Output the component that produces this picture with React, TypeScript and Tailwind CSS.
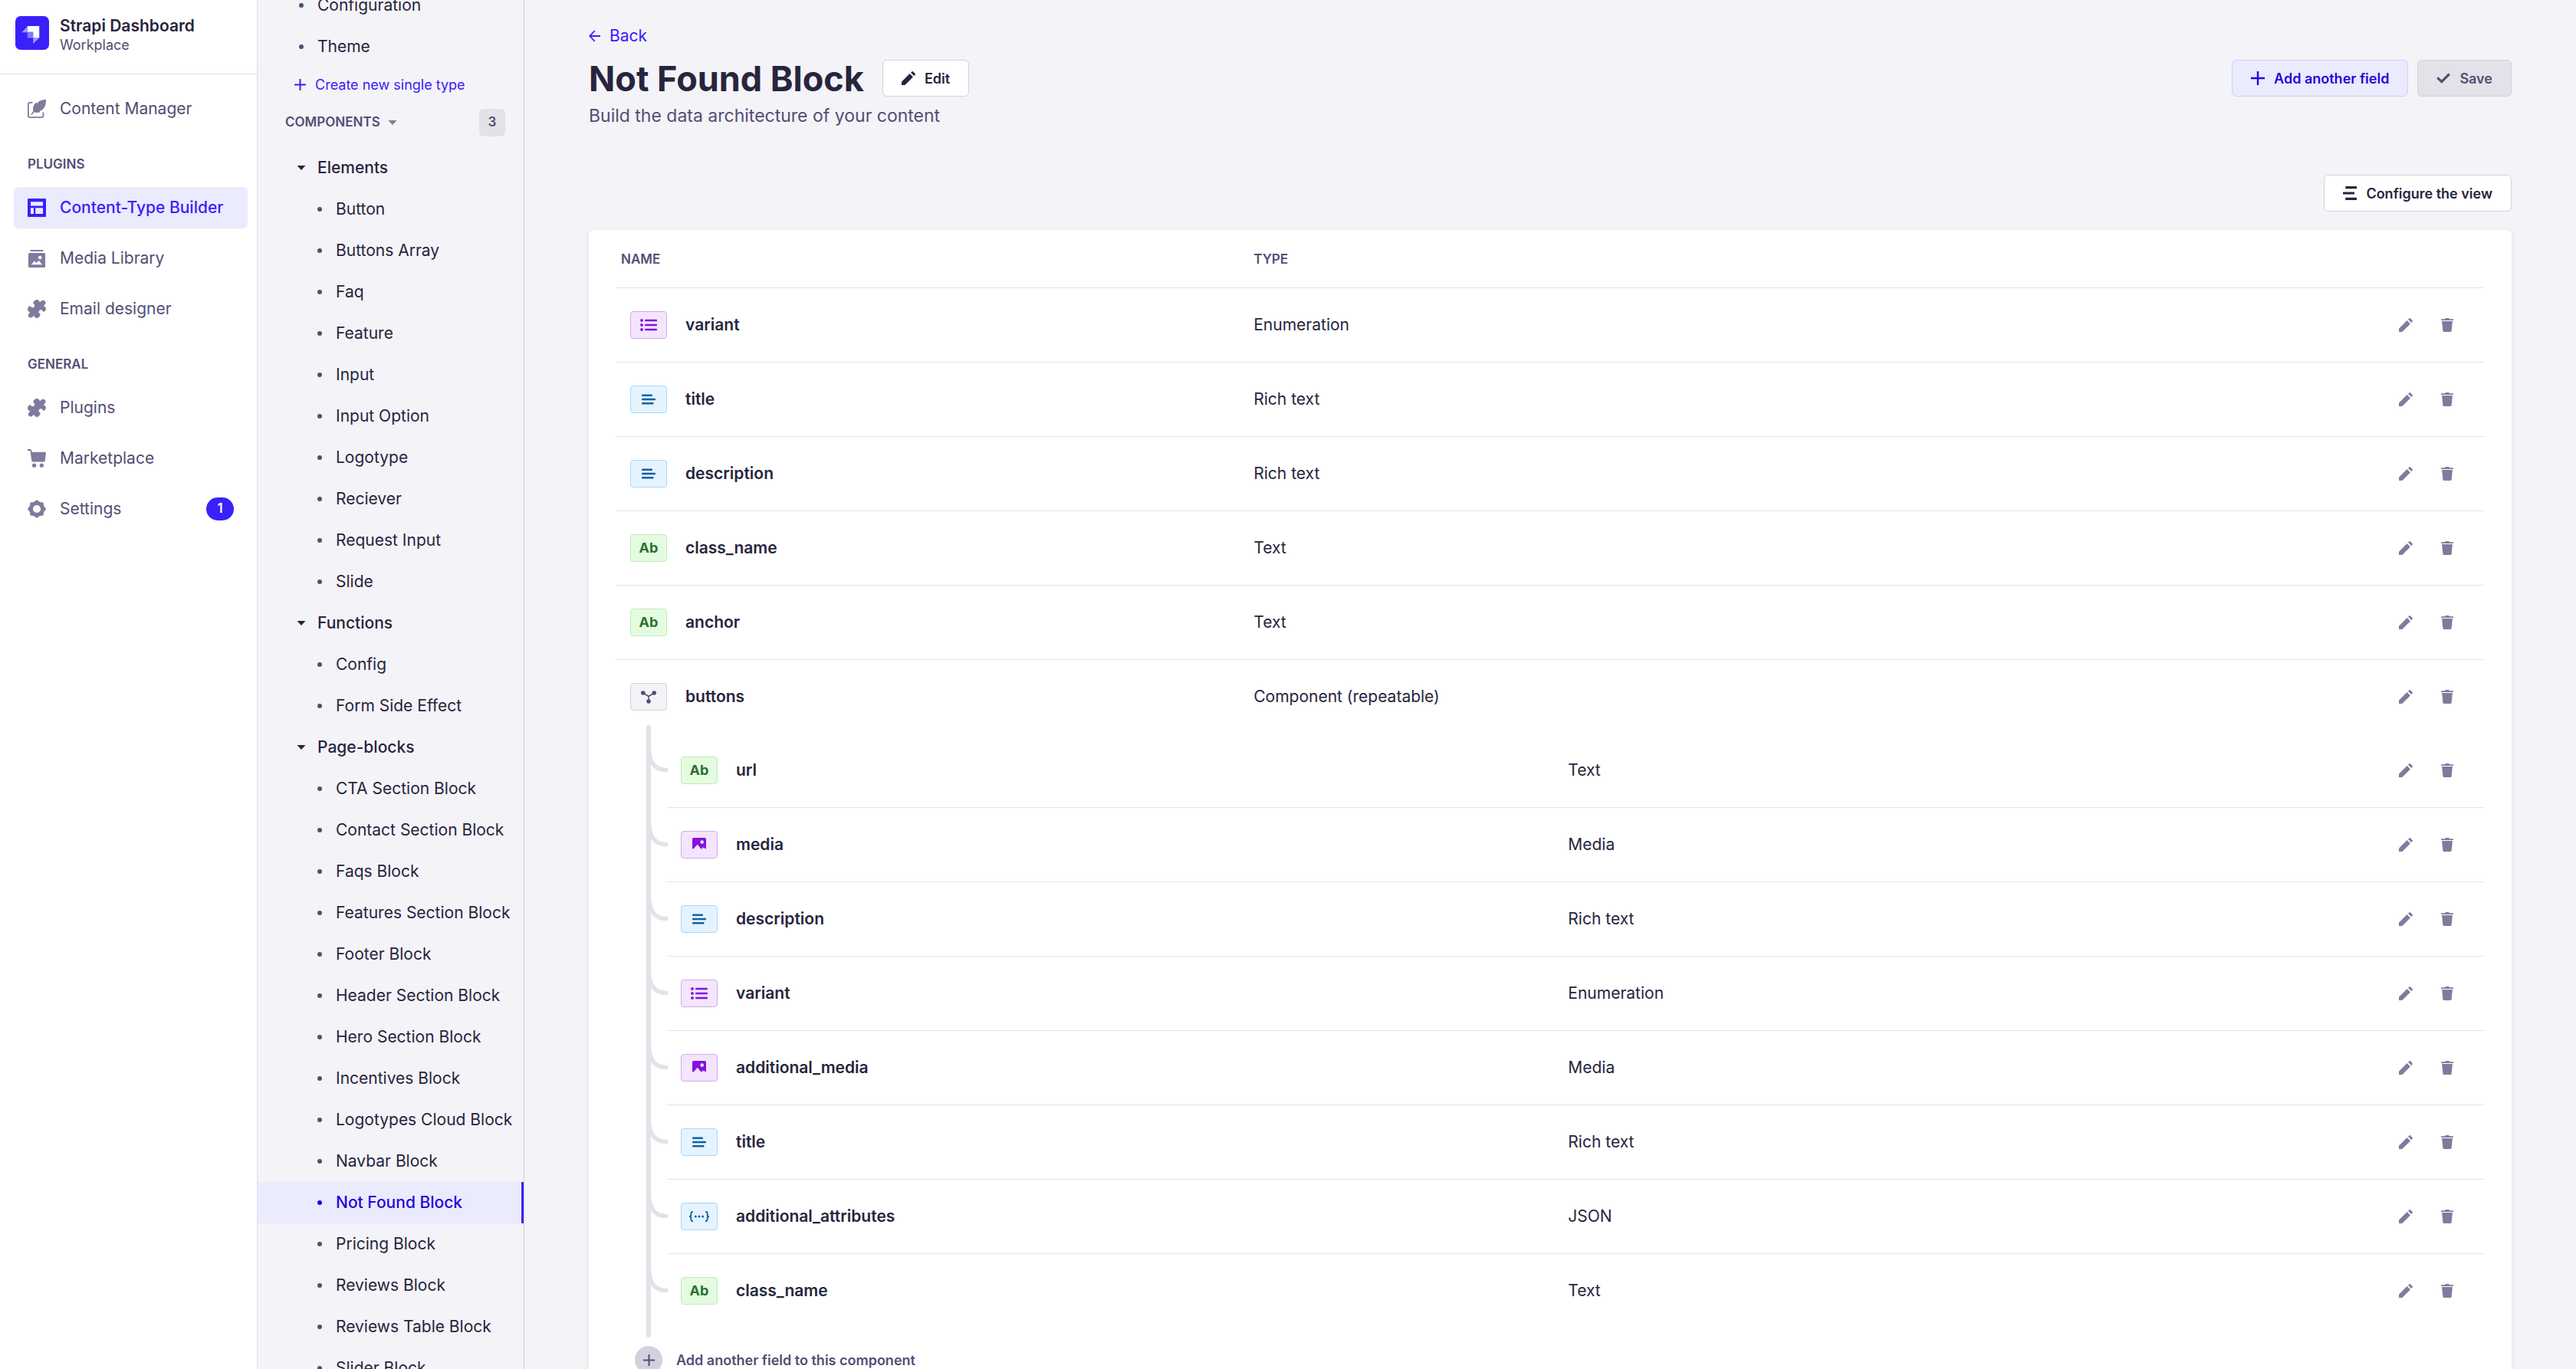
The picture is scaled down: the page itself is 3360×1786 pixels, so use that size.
import type { ReactNode } from 'react';

type Kind = 'enum' | 'rich' | 'text' | 'media' | 'json' | 'component';

interface Field {
  name: string;
  type: string;
  kind: Kind;
}

const fields: Field[] = [
  { name: 'variant', type: 'Enumeration', kind: 'enum' },
  { name: 'title', type: 'Rich text', kind: 'rich' },
  { name: 'description', type: 'Rich text', kind: 'rich' },
  { name: 'class_name', type: 'Text', kind: 'text' },
  { name: 'anchor', type: 'Text', kind: 'text' },
];

const buttonFields: Field[] = [
  { name: 'url', type: 'Text', kind: 'text' },
  { name: 'media', type: 'Media', kind: 'media' },
  { name: 'description', type: 'Rich text', kind: 'rich' },
  { name: 'variant', type: 'Enumeration', kind: 'enum' },
  { name: 'additional_media', type: 'Media', kind: 'media' },
  { name: 'title', type: 'Rich text', kind: 'rich' },
  { name: 'additional_attributes', type: 'JSON', kind: 'json' },
  { name: 'class_name', type: 'Text', kind: 'text' },
];

const groups = [
  {
    title: 'Elements',
    items: ['Button', 'Buttons Array', 'Faq', 'Feature', 'Input', 'Input Option', 'Logotype', 'Reciever', 'Request Input', 'Slide'],
  },
  { title: 'Functions', items: ['Config', 'Form Side Effect'] },
  {
    title: 'Page-blocks',
    items: [
      'CTA Section Block', 'Contact Section Block', 'Faqs Block', 'Features Section Block', 'Footer Block',
      'Header Section Block', 'Hero Section Block', 'Incentives Block', 'Logotypes Cloud Block', 'Navbar Block',
      'Not Found Block', 'Pricing Block', 'Reviews Block', 'Reviews Table Block', 'Slider Block',
    ],
  },
];

/* ---------- icons ---------- */

const Logo = () => (
  <svg viewBox="0 0 131 131" className="size-11 shrink-0" aria-hidden="true">
    <rect width="131" height="131" rx="20" fill="#3921fb" />
    <path d="M47 39H93V85H69V62H47z" fill="#fff" />
    <path d="M25 63L47 40V63zM69 85H93L69 107z" fill="#a195fd" />
    <path d="M47 62H69V85H47z" fill="#8577fc" />
  </svg>
);

const NavSvg = ({ children }: { children: ReactNode }) => (
  <svg viewBox="0 0 24 24" className="size-6 shrink-0" fill="currentColor" aria-hidden="true">{children}</svg>
);

const FeatherIcon = () => (
  <NavSvg>
    <path d="M6.500 3.800H3A2.200 2.200 0 0 0 .9 6V21A2.200 2.200 0 0 0 3 23.100H18.300A2.200 2.200 0 0 0 20.400 21V16.500" fill="none" stroke="currentColor" strokeWidth="1.800" />
    <path d="M24 0C24 6.500 22.500 12.500 15.500 15.300L16.500 16.200C13.500 17.300 10.500 17 8.700 16.200L5.300 20.100 4.200 19.300 7.300 15C6.600 10.500 7.600 6 11.500 3.500L12.500 5.500C13.300 2.300 17.500 0 24 0z" />
  </NavSvg>
);

const LayoutIcon = () => (
  <NavSvg>
    <path fillRule="evenodd" d="M1 0H23A1 1 0 0 1 24 1V23A1 1 0 0 1 23 24H1A1 1 0 0 1 0 23V1A1 1 0 0 1 1 0zM4 4.300V9.500H20V4.300zM4 12.200V20H8V12.200zM10.200 12.200V20H20V12.200z" />
  </NavSvg>
);

const MediaLibraryIcon = () => (
  <NavSvg>
    <rect x="3.500" y="1" width="17" height="2" rx=".6" />
    <path fillRule="evenodd" d="M2.200 5H21.800A1.200 1.200 0 0 1 23 6.200V22.800A1.200 1.200 0 0 1 21.800 24H2.200A1.200 1.200 0 0 1 1 22.800V6.200A1.200 1.200 0 0 1 2.200 5zM16.200 8.700A2.200 2.200 0 1 0 16.200 13.100A2.200 2.200 0 1 0 16.200 8.700zM4.800 20.300H19.200L14.600 14.800 11.500 18 8.800 15.500z" />
  </NavSvg>
);

const PuzzleIcon = () => (
  <NavSvg>
    <path d="M12 0c1.600 0 2.800.9 3.300 2.200.4 1 1.300.8 1.800.2.9-1.200 2.200-2 3.600-1.700 1.600.3 2.800 1.500 2.800 3.200 0 1.500-.8 2.500-1.800 3.200-.7.500-.8 1.200 0 1.600 1.400.5 2.300 1.700 2.300 3 0 1.700-1.200 3.400-2.600 4-.8.3-1.300-.1-1.600-.8-.6-1.300-1.700-2-3-1.700-1.600.3-2.500 1.900-2.200 3.300.2 1 .9 1.500 1.600 1.900.6.4.7 1 .2 1.600C15.500 22.800 13.800 24 12 24c-1.600 0-2.700-.9-3.200-2.200-.3-.7-1-.8-1.500-.2-.9 1.200-2 2-3.500 1.900C2 23.400.8 22.100.8 20.500c0-1.300.7-2.300 1.700-3 .6-.5.6-1.200-.1-1.600C1 15.300 0 13.900 0 12.300 0 10.800 1.200 9 2.700 8.300c.7-.3 1.200.1 1.600.7.6 1 1.600 1.500 2.800 1.200 1.500-.3 2.300-1.700 2-3.100-.2-.9-.8-1.500-1.500-2-.6-.4-.6-1-.2-1.600C8.600 1.500 10.200 0 12 0z" />
  </NavSvg>
);

const CartIcon = () => (
  <NavSvg>
    <path d="M0 0H3.200Q5 0 5.300 2L5.600 3.700H24L22.800 15Q22.600 16.500 21 16.500H7Q5.400 16.500 5.200 15L3.600 3Q3.500 2 2.800 2H0z" />
    <circle cx="8.600" cy="21.200" r="2.600" />
    <circle cx="18.300" cy="21.200" r="2.600" />
  </NavSvg>
);

const GearIcon = () => (
  <NavSvg>
    <circle cx="12" cy="12" r="7.600" fill="none" stroke="currentColor" strokeWidth="5" />
    {[0, 45, 90, 135, 180, 225, 270, 315].map((a) => (
      <path key={a} d="M8.500 3L10.600.9Q12-.6 13.400.9L15.500 3z" transform={`rotate(${a} 12 12)`} />
    ))}
  </NavSvg>
);

const PencilIcon = () => (
  <svg viewBox="0 0 18 18" className="size-[18px]" fill="currentColor" aria-hidden="true">
    <path d="M0 13.700L10.600 3.100 14.900 7.400 4.300 18H0zM12 1.800L13.300.5Q14.200-.4 15.100.5L17.500 2.900Q18.400 3.800 17.500 4.700L16.200 6z" />
  </svg>
);

const TrashIcon = () => (
  <svg viewBox="0 0 16 18" className="h-[18px] w-4" fill="currentColor" aria-hidden="true">
    <path d="M0 1.300H5L5.800 0H10.200L11 1.300H16V3H0zM1.100 4H14.900L13.600 16.800Q13.400 18 12.300 18H3.700Q2.600 18 2.400 16.800z" />
  </svg>
);

const PlusIcon = ({ className }: { className: string }) => (
  <svg viewBox="0 0 18 18" className={className} fill="currentColor" aria-hidden="true">
    <path d="M7.800 0H10.200V7.800H18V10.200H10.200V18H7.800V10.200H0V7.800H7.800z" />
  </svg>
);

const CheckIcon = () => (
  <svg viewBox="0 0 18 18" className="size-[18px]" fill="none" stroke="currentColor" strokeWidth="3.200" aria-hidden="true">
    <path d="M1.200 8.400L6.800 13.600 16.800 3.500" />
  </svg>
);

const ConfigureIcon = () => (
  <svg viewBox="0 0 18 18" className="size-[18px]" fill="currentColor" aria-hidden="true">
    <path d="M3.300 0H18V3.200H3.300zM0 7.400H15V10.600H0zM3.300 14.800H18V18H3.300z" />
  </svg>
);

const BackArrow = () => (
  <svg viewBox="0 0 15 16" className="h-4 w-[15px]" fill="none" stroke="currentColor" strokeWidth="1.800" aria-hidden="true">
    <path d="M15 8H1.500M7.800 1L1.300 8 7.800 15" />
  </svg>
);

const Caret = () => (
  <svg viewBox="0 0 12 6" className="h-1.5 w-3" fill="currentColor" aria-hidden="true">
    <path d="M.5 0H11.500L6 6z" />
  </svg>
);

const badgeStyles: Record<Kind, string> = {
  enum: 'border-[#d4a9f0] bg-[#f3e5fc] text-[#8312e0]',
  media: 'border-[#d4a9f0] bg-[#f3e5fc] text-[#8312e0]',
  rich: 'border-[#a8d7fc] bg-[#e5f3ff] text-[#0f63a6]',
  json: 'border-[#a8d7fc] bg-[#e5f3ff] text-[#0f63a6]',
  text: 'border-[#bcecb2] bg-[#e5fbe0] text-[#2a7036]',
  component: 'border-[#d3d1dd] bg-[#f4f3f8] text-[#524e74]',
};

function BadgeGlyph({ kind }: { kind: Kind }) {
  switch (kind) {
    case 'text':
      return <span className="text-[18px] leading-6 font-bold">Ab</span>;
    case 'enum':
      return (
        <svg viewBox="0 0 22 16" className="h-4 w-[22px]" fill="currentColor">
          {[2, 8, 14].map((y) => (
            <g key={y}>
              <circle cx="2" cy={y} r="1.900" />
              <rect x="6" y={y - 1.300} width="16" height="2.600" rx=".8" />
            </g>
          ))}
        </svg>
      );
    case 'rich':
      return (
        <svg viewBox="0 0 18 14" className="h-3.5 w-[18px]" fill="currentColor">
          <rect width="14" height="2.600" y=".4" rx=".8" />
          <rect width="18" height="2.600" y="5.700" rx=".8" />
          <rect width="15.500" height="2.600" y="11" rx=".8" />
        </svg>
      );
    case 'media':
      return (
        <svg viewBox="0 0 18 15" className="-mt-1 h-[15px] w-[18px]" fill="currentColor">
          <path fillRule="evenodd" d="M1.800 0H16.200Q18 0 18 1.800V14L17 14.800 15.800 12.500 14.800 14 13.800 12 12.300 14.500Q11.500 14.800 11 14L7.500 9.500Q6.700 8.700 6 9.500L1.500 14.500 0 14V1.800Q0 0 1.800 0zM12.700 3.300A2.300 2.300 0 1 0 12.700 7.900A2.300 2.300 0 1 0 12.700 3.300z" />
        </svg>
      );
    case 'json':
      return (
        <svg viewBox="0 0 28 14" className="h-3.5 w-7" fill="none" stroke="currentColor" strokeWidth="1.800">
          <path d="M6 .9H5.200Q3.400.9 3.400 2.700V5Q3.400 7 1 7 3.400 7 3.400 9V11.300Q3.400 13.100 5.200 13.100H6M22 .9H22.800Q24.600.9 24.600 2.700V5Q24.600 7 27 7 24.600 7 24.600 9V11.300Q24.600 13.100 22.800 13.100H22" />
          <g fill="currentColor" stroke="none">
            <circle cx="9.300" cy="7" r="1.500" />
            <circle cx="14" cy="7" r="1.500" />
            <circle cx="18.700" cy="7" r="1.500" />
          </g>
        </svg>
      );
    default:
      return (
        <svg viewBox="0 0 20 17" className="h-[17px] w-5" fill="currentColor">
          <circle cx="2.800" cy="3" r="2.800" />
          <circle cx="17.200" cy="3" r="2.800" />
          <circle cx="10" cy="14" r="2.800" />
          <path d="M2.800 3L10 7.500 17.200 3M10 7.500V14" fill="none" stroke="currentColor" strokeWidth="1.500" />
        </svg>
      );
  }
}

/* ---------- navigation ---------- */

function NavLink({ icon, label, active = false, badge }: { icon: ReactNode; label: string; active?: boolean; badge?: string }) {
  return (
    <li>
      <a
        href="#"
        aria-current={active ? 'page' : undefined}
        className={
          active
            ? 'flex h-[54px] items-center gap-[18px] rounded-md bg-[#eaebfd] px-[18px] font-medium text-[#3921fb]'
            : 'flex h-[54px] items-center gap-[18px] rounded-md px-[18px] text-[#524e74]'
        }
      >
        <span className={active ? 'text-[#3921fb]' : 'text-[#7f7b9c]'}>{icon}</span>
        {label}
        {badge && (
          <span className="ml-auto flex h-[30px] w-9 items-center justify-center rounded-full bg-[#3921fb] text-[17px] font-semibold text-white">
            {badge}
          </span>
        )}
      </a>
    </li>
  );
}

const NavHeading = ({ children }: { children: ReactNode }) => (
  <h2 className="mt-[33px] mb-[18px] px-[18px] text-[17px] leading-6 font-semibold text-[#524e74] uppercase">{children}</h2>
);

function MainNav() {
  return (
    <nav aria-label="Main" className="w-[336px] shrink-0 border-r border-[#dfdee8] bg-white">
      <div className="flex h-[97px] gap-[14px] border-b border-[#dfdee8] pt-[21px] pl-5">
        <Logo />
        <div>
          <p className="text-[21px] leading-[26px] font-semibold text-[#27253d]">Strapi Dashboard</p>
          <p className="text-[18px] leading-6 text-[#524e74]">Workplace</p>
        </div>
      </div>
      <div className="pt-[18px] pr-3 pl-[18px] text-[21px]">
        <ul>
          <NavLink icon={<FeatherIcon />} label="Content Manager" />
        </ul>
        <NavHeading>Plugins</NavHeading>
        <ul className="flex flex-col gap-3">
          <NavLink icon={<LayoutIcon />} label="Content-Type Builder" active />
          <NavLink icon={<MediaLibraryIcon />} label="Media Library" />
          <NavLink icon={<PuzzleIcon />} label="Email designer" />
        </ul>
        <NavHeading>General</NavHeading>
        <ul className="flex flex-col gap-3">
          <NavLink icon={<PuzzleIcon />} label="Plugins" />
          <NavLink icon={<CartIcon />} label="Marketplace" />
          <NavLink icon={<GearIcon />} label="Settings" badge="1" />
        </ul>
      </div>
    </nav>
  );
}

const Bullet = ({ active = false }: { active?: boolean }) => (
  <span className={active ? 'size-1.5 rounded-full bg-[#2404dd]' : 'size-1.5 rounded-full bg-[#524e74]'} />
);

function SubNav() {
  return (
    <nav aria-label="Content-Type Builder" className="w-[348px] shrink-0 overflow-hidden border-r border-[#cfcdd9] text-[21px] text-[#27253d]">
      <ul className="-mt-5">
        {['Configuration', 'Theme'].map((t) => (
          <li key={t}>
            <a href="#" className="flex h-[54px] items-center gap-[18px] pl-[54px]">
              <Bullet />
              {t}
            </a>
          </li>
        ))}
      </ul>
      <button type="button" className="flex h-[45px] items-center gap-3 pl-12 text-[18px] text-[#3921fb]">
        <PlusIcon className="size-[15px]" />
        Create new single type
      </button>
      <div className="mt-[9px] mb-[14px] flex h-9 items-center pr-6 pl-9 text-[17px] font-semibold text-[#524e74]">
        <button type="button" aria-expanded="true" className="flex items-center gap-2.5 uppercase">
          Components
          <span className="text-[#7f7b9c]"><Caret /></span>
        </button>
        <span className="ml-auto flex h-9 w-[34px] items-center justify-center rounded-md bg-[#e3e2e9]">3</span>
      </div>
      {groups.map((g) => (
        <section key={g.title}>
          <button type="button" aria-expanded="true" className="flex h-[54px] w-full items-center gap-[15px] pl-[51px] font-medium">
            <Caret />
            {g.title}
          </button>
          <ul>
            {g.items.map((item) => {
              const active = item === 'Not Found Block';
              return (
                <li key={item}>
                  <a
                    href="#"
                    aria-current={active ? 'page' : undefined}
                    className={
                      active
                        ? 'flex h-[54px] items-center gap-[18px] border-r-3 border-[#3921fb] bg-[#eaebfd] pl-[78px] font-medium whitespace-nowrap text-[#2404dd]'
                        : 'flex h-[54px] items-center gap-[18px] pl-[78px] whitespace-nowrap'
                    }
                  >
                    <Bullet active={active} />
                    {item}
                  </a>
                </li>
              );
            })}
          </ul>
        </section>
      ))}
    </nav>
  );
}

/* ---------- fields table ---------- */

const FieldName = ({ field }: { field: Field }) => (
  <div className="flex items-center gap-6 pl-[18px] font-semibold">
    <span aria-hidden="true" className={`flex h-9 w-12 items-center justify-center rounded-[4px] border ${badgeStyles[field.kind]}`}>
      <BadgeGlyph kind={field.kind} />
    </span>
    {field.name}
  </div>
);

const RowActions = ({ name }: { name: string }) => (
  <div className="flex justify-end gap-1.5 pr-6 text-[#7f7b9c]">
    <button type="button" aria-label={`Edit ${name}`} className="flex size-12 items-center justify-center"><PencilIcon /></button>
    <button type="button" aria-label={`Delete ${name}`} className="flex size-12 items-center justify-center"><TrashIcon /></button>
  </div>
);

function NestedFields() {
  return (
    <div className="relative pl-[66px]">
      <span className="absolute -top-[11px] -bottom-[13px] left-[39px] w-1.5 rounded-full bg-[#e3e2e9]" />
      <table className="w-full table-fixed border-separate border-spacing-0">
        <colgroup>
          <col className="w-[49%]" />
          <col />
          <col className="w-40" />
        </colgroup>
        <tbody>
          {buttonFields.map((f, i) => {
            const cell = i === buttonFields.length - 1 ? 'h-24 p-0' : 'h-[97px] border-b border-[#e3e2e9] p-0';
            return (
              <tr key={f.name}>
                <td className={`relative ${cell}`}>
                  <svg viewBox="0 0 27 38" className="absolute top-[13px] -left-6 h-[38px] w-[27px]" fill="none" stroke="#e3e2e9" strokeWidth="5.500" strokeLinecap="round" aria-hidden="true">
                    <path d="M.3 3C.3 25 8 34.500 22.800 34.500" />
                  </svg>
                  <FieldName field={f} />
                </td>
                <td className={`pl-[14px]! ${cell}`}>{f.type}</td>
                <td className={cell}><RowActions name={f.name} /></td>
              </tr>
            );
          })}
        </tbody>
      </table>
    </div>
  );
}

function FieldsCard() {
  const cell = 'h-[97px] border-b border-[#e3e2e9] p-0';
  const head = 'h-[76px] border-b border-[#e3e2e9] p-0 pt-[3px]! text-left text-[17px] font-semibold text-[#524e74] uppercase';
  return (
    <div className="mt-6 rounded-md bg-white px-9 pb-9 text-[21px] text-[#27253d] shadow-[0_1px_6px_rgba(33,33,52,0.1)]">
      <table className="w-full table-fixed border-separate border-spacing-0">
        <colgroup>
          <col className="w-[34%]" />
          <col />
          <col className="w-40" />
        </colgroup>
        <thead>
          <tr>
            <th scope="col" className={`pl-1.5! ${head}`}>Name</th>
            <th scope="col" colSpan={2} className={`pl-[3px]! ${head}`}>Type</th>
          </tr>
        </thead>
        <tbody>
          {fields.map((f) => (
            <tr key={f.name}>
              <td className={cell}><FieldName field={f} /></td>
              <td className={`pl-[3px]! ${cell}`}>{f.type}</td>
              <td className={cell}><RowActions name={f.name} /></td>
            </tr>
          ))}
          <tr>
            <td className="h-24 p-0"><FieldName field={{ name: 'buttons', type: 'Component (repeatable)', kind: 'component' }} /></td>
            <td className="h-24 p-0 pl-[3px]">Component (repeatable)</td>
            <td className="h-24 p-0"><RowActions name="buttons" /></td>
          </tr>
          <tr>
            <td colSpan={3} className="p-0"><NestedFields /></td>
          </tr>
        </tbody>
      </table>
      <button type="button" className="mt-6 ml-6 flex items-center gap-[18px] text-[18px] font-semibold text-[#524e74]">
        <span className="flex size-9 items-center justify-center rounded-full bg-[#d3d1dd]"><PlusIcon className="size-[15px]" /></span>
        Add another field to this component
      </button>
    </div>
  );
}

export default function App() {
  return (
    <div className="flex h-screen overflow-hidden bg-[#f4f3f8] font-['Inter',sans-serif]">
      <MainNav />
      <SubNav />
      <main className="min-w-0 flex-1 overflow-hidden px-[84px] pt-8">
        <a href="#" className="inline-flex h-[30px] items-center gap-3 align-top text-[21px] text-[#3921fb]">
          <BackArrow />
          Back
        </a>
        <header className="mt-4">
          <div className="flex h-12 items-center">
            <h1 className="pt-0.5 text-[45px] leading-[48px] font-bold text-[#27253d]">Not Found Block</h1>
            <button type="button" className="ml-6 flex h-12 items-center gap-3 rounded-md border border-[#d3d1dd] bg-white px-6 text-[18px] font-semibold text-[#27253d]">
              <PencilIcon />
              Edit
            </button>
            <div className="ml-auto flex gap-3">
              <button type="button" className="flex h-12 items-center gap-3 rounded-md border border-[#d0cefb] bg-[#eaebfd] px-6 text-[18px] font-semibold text-[#2404dd]">
                <PlusIcon className="size-[18px]" />
                Add another field
              </button>
              <button type="button" disabled className="flex h-12 items-center gap-3 rounded-md border border-[#d3d1dd] bg-[#e3e2e9] px-6 text-[18px] font-semibold text-[#524e74]">
                <CheckIcon />
                Save
              </button>
            </div>
          </div>
          <p className="mt-[7px] text-[23px] leading-9 text-[#524e74]">Build the data architecture of your content</p>
        </header>
        <div className="mt-[59px] flex justify-end">
          <button type="button" className="flex h-12 items-center gap-3 rounded-md border border-[#d3d1dd] bg-white px-6 text-[18px] font-semibold text-[#27253d]">
            <ConfigureIcon />
            Configure the view
          </button>
        </div>
        <FieldsCard />
      </main>
    </div>
  );
}
